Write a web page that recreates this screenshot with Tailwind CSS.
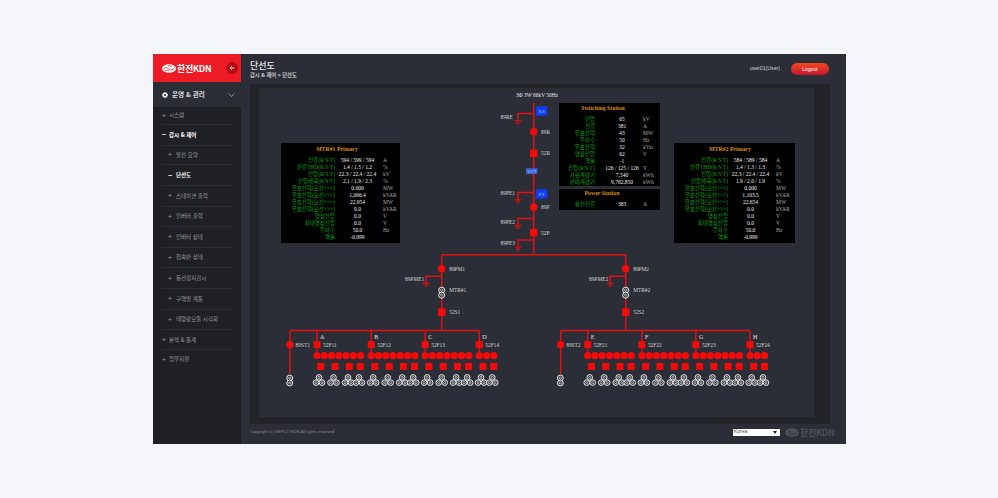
<!DOCTYPE html>
<html lang="ko">
<head>
  <meta charset="UTF-8" />
  <title>단선도</title>
  <script src="https://cdn.jsdelivr.net/npm/@tailwindcss/browser@4"></script>
</head>
<body class="bg-[#f4f6fa] w-[998px] h-[498px] overflow-hidden pt-[54px] pl-[153px] font-['Noto_Sans_CJK_KR',sans-serif]">
  <div class="flex w-[693px] h-[390px] bg-[#2b2e36]">

    <!-- Sidebar -->
    <aside class="w-[88px] h-full shrink-0 flex flex-col bg-[#1f2025]">
      <div class="h-[28px] bg-[#ed1c24] flex items-center pl-[9px] pr-[3px]">
        <svg class="w-[14px] h-[9px] shrink-0" viewBox="0 0 28 18">
          <ellipse cx="14" cy="9" rx="14" ry="8.5" fill="#fff"/>
          <path d="M3 10c5-5 9-1 12 1s7 1 10-4M6 14c4-2 7-1 9 0M12 4c3-1 6 0 8 2" fill="none" stroke="#ed1c24" stroke-width="1.6"/>
        </svg>
        <span class="ml-[1px] text-[9px] leading-none font-bold text-white tracking-[-0.3px] whitespace-nowrap">한전KDN</span>
        <span class="ml-auto w-[12px] h-[12px] rounded-full bg-[#b30d12] flex items-center justify-center">
          <svg class="w-[6px] h-[6px]" viewBox="0 0 12 12" fill="none" stroke="#fff" stroke-width="1.6"><path d="M11 6H2M5.5 2.5 2 6l3.5 3.5"/></svg>
        </span>
      </div>
      <div class="h-[25px] bg-[#2a2d34] flex items-center pl-[9px] pr-[6px]">
        <svg class="w-[6px] h-[6px]" viewBox="0 0 12 12"><circle cx="6" cy="6" r="3.6" fill="none" stroke="#fff" stroke-width="3"/><path d="M6 0v2M6 10v2M0 6h2M10 6h2M1.8 1.8l1.4 1.4M8.8 8.8l1.4 1.4M1.8 10.2l1.4-1.4M8.8 3.2l1.4-1.4" stroke="#fff" stroke-width="1.6"/></svg>
        <span class="ml-[4px] text-[6.6px] leading-none font-bold text-[#d8d8d8]">운영 &amp; 관리</span>
        <svg class="ml-auto w-[7px] h-[4px]" viewBox="0 0 14 8" fill="none" stroke="#a8a8a8" stroke-width="1.6"><path d="m1 1 6 6 6-6"/></svg>
      </div>
      <nav id="menu" class="flex flex-col pl-[9px] pr-[9px] text-[5.5px] text-[#9a9a9a]"></nav>
    </aside>

    <!-- Main -->
    <main class="flex-1 flex flex-col pl-[9px] pr-[16px]">
      <header class="h-[30px] flex items-start justify-between shrink-0">
        <div class="pt-[5px]">
          <h1 class="text-[9px] leading-[13px] font-medium text-[#e8e8e8]">단선도</h1>
          <p class="text-[5.3px] leading-[7px] font-medium text-[#e0e0e0]">감시 &amp; 제어 &gt; 단선도</p>
        </div>
        <div class="flex items-center pt-[9px]">
          <span class="text-[5.2px] text-[#cfcfcf] font-['Liberation_Sans',sans-serif]">user01(User)</span>
          <button class="ml-[11px] mr-[1px] w-[38px] h-[12px] rounded-full bg-gradient-to-b from-[#f2471f] to-[#c5102c] text-[5px] leading-none text-white font-['Liberation_Sans',sans-serif]">Logout</button>
        </div>
      </header>

      <section class="h-[340px] rounded-[3px] bg-[#212327] pl-[9px] pr-[16px] pt-[4px] pb-[7px] shrink-0">
        <div class="relative w-[555px] h-[329px] bg-[#2b2e36] font-['Liberation_Serif','Noto_Sans_CJK_KR',serif]">
          <svg id="sld" class="absolute inset-0" width="555" height="329" viewBox="259 88 555 329"></svg>
          <div id="mtr1" class="absolute left-[22px] top-[55px] w-[119px] h-[100px] bg-black pt-[3px]"></div>
          <div id="mtr2" class="absolute left-[415px] top-[55px] w-[121px] h-[100px] bg-black pt-[3px]"></div>
          <div id="sw" class="absolute left-[300px] top-[15px] w-[101px] h-[83px] bg-black pt-[2px]"></div>
          <div id="ps" class="absolute left-[300px] top-[101px] w-[101px] h-[21px] bg-black pt-[1px]"></div>
        </div>
      </section>

      <footer class="flex-1 flex items-center pb-[4px] font-['Liberation_Sans',sans-serif]">
        <span class="text-[4.2px] text-[#8a8d93] whitespace-nowrap">Copyright (c) KEPCO KDN All rights reserved</span>
        <div class="ml-auto w-[47px] h-[7px] bg-white flex items-center justify-between pl-[1px] pr-[3px] text-[5px] text-[#555]">
          <span>Korea</span>
          <span class="w-0 h-0 border-x-[2px] border-x-transparent border-t-[3px] border-t-[#222]"></span>
        </div>
        <div class="ml-[5px] -mr-[4px] w-[49px] shrink-0 flex items-center text-[#4d5057] font-['Noto_Sans_CJK_KR',sans-serif]">
          <svg class="w-[14px] h-[9px] shrink-0" viewBox="0 0 28 18"><ellipse cx="14" cy="9" rx="14" ry="8.5" fill="#4d5057"/><path d="M3 10c5-5 9-1 12 1s7 1 10-4M6 14c4-2 7-1 9 0" fill="none" stroke="#2b2e36" stroke-width="1.6"/></svg>
          <span class="ml-[1px] text-[9px] leading-none font-bold tracking-[-0.3px] whitespace-nowrap">한전KDN</span>
        </div>
      </footer>
    </main>
  </div>

  <script>
    // sidebar
    const menu = [
      ['시스템', 0, 18], ['감시 & 제어', 0, 20.5, 1], ['발전 요약', 1, 19.7], ['단선도', 1, 20.8, 1],
      ['스테이션 출력', 1, 20.6], ['인버터 출력', 1, 20.6], ['인버터 상태', 1, 20.6], ['접속반 상태', 1, 20.6],
      ['동선정지감시', 1, 20.6], ['구역별 계통', 1, 20.6], ['태양광모듈 시각화', 1, 20.6], ['분석 & 통계', 0, 20], ['업무지원', 0, 19]
    ];
    document.getElementById('menu').innerHTML = menu.map(([name, sub, h, on], i) => `
      <div class="flex items-center border-b ${i < menu.length - 1 ? 'border-[#2b2d32]' : 'border-transparent'} ${sub ? 'pl-[6px]' : ''} ${on ? 'text-white font-bold' : ''}" style="height:${h}px">
        <span class="w-[7px] text-[7px] leading-none">${on ? '−' : '+'}</span><span class="${sub ? 'ml-[1px]' : ''}">${name}</span>
      </div>`).join('');

    // data panels
    function panel(id, title, rows, labelW, valueW, gap, titleX) {
      document.getElementById(id).innerHTML =
        `<div class="h-[7px] leading-[7px] text-[5.8px] font-bold text-[#d98f0e] text-center whitespace-nowrap" style="width:${titleX * 2}px">${title}</div>
         <div class="mt-[3.6px]">` + rows.map(r => `
          <div class="flex h-[7.08px] leading-[7.08px] text-[5.5px] whitespace-nowrap">
            <span class="text-right text-[#0fa015]" style="width:${labelW}px">${r[0]}</span>
            <span class="text-center text-[#f0f0f0]" style="width:${valueW}px;margin-left:${gap}px">${r[1]}</span>
            <span class="ml-[3px] text-[#a8a8a8]">${r[2] || ''}</span>
          </div>`).join('') + '</div>';
    }
    const mtr = (a, b, c, d, e, f, g, h) => [
      ['전류(R/S/T)', a, 'A'], ['전류THD(R/S/T)', b, '%'], ['전압(R/S/T)', c, 'kV'], ['전압왜곡(R/S/T)', d, '%'],
      ['유효전력(모선&lt;&lt;&lt;)', e, 'MW'], ['무효전력(모선&lt;&lt;&lt;)', f, 'kVAR'], ['유효전력(모선&gt;&gt;&gt;)', g, 'MW'], ['무효전력(모선&gt;&gt;&gt;)', h, 'kVAR'],
      ['영상전압', '0.0', 'V'], ['최대영상전압', '0.0', 'V'], ['주파수', '50.0', 'Hz'], ['역률', '-0.999', '']
    ];
    panel('mtr1', 'MTR#1 Primary', mtr('594 / 599 / 594', '1.4 / 1.5 / 1.2', '22.3 / 22.4 / 22.4', '2.1 / 1.9 / 2.3', '0.000', '1,066.4', '22.954', '0.0'), 54, 45, 0, 56);
    panel('mtr2', 'MTR#2 Primary', mtr('584 / 589 / 584', '1.4 / 1.3 / 1.3', '22.3 / 22.4 / 22.4', '1.9 / 2.0 / 1.9', '0.000', '1,103.5', '22.654', '0.0'), 54, 45, 0, 56);
    panel('sw', 'Switching Station', [
      ['전압', '65', 'kV'], ['전류', '381', 'A'], ['유효전력', '43', 'MW'], ['주파수', '50', 'Hz'], ['무효전력', '32', 'kVar'],
      ['영상전압', '62', 'V'], ['역률', '-1', ''], ['전압(R/S/T)', '126 / 125 / 126', 'V'], ['사용계량기', '7,540', 'kWh'], ['판매계량기', '9,762,850', 'kWh']
    ], 36, 36, 9, 44);
    panel('ps', 'Power Station', [['송전전류', '383', 'A']], 36, 36, 9, 43);

    // single line diagram, drawn in page coordinates
    const RED = '#e00f14', BRIGHT = '#f50a0a';
    let s = '';
    const line = d => s += `<path d="${d}" fill="none" stroke="${RED}" stroke-width="1.5"/>`;
    const dot = (x, y, r = 3.7) => s += `<circle cx="${x}" cy="${y}" r="${r}" fill="${BRIGHT}"/>`;
    const box = (x, y, w = 7.4) => s += `<rect x="${x - w / 2}" y="${y - w / 2}" width="${w}" height="${w}" fill="${BRIGHT}"/>`;
    const label = (x, y, t, anchor = 'start', fill = '#d4d4d4', size = 5.4) =>
      s += `<text x="${x}" y="${y + 1.9}" text-anchor="${anchor}" font-size="${size}" fill="${fill}">${t}</text>`;
    // branch off a feeder to an earth switch
    function earth(x, y, ex, name, lx, ly) {
      line(`M${x} ${y}H${ex}V${y + 7}`);
      s += `<path d="M${ex - 3.5} ${y + 7.2}h7M${ex - 2.3} ${y + 8.8}h4.6M${ex - 1.1} ${y + 10.4}h2.2" stroke="${RED}" stroke-width="1" fill="none"/>`;
      label(lx, ly, name);
    }
    function coil(x, y, r = 2.8) {
      s += `<circle cx="${x}" cy="${y}" r="${r}" fill="#2b2e36" stroke="#f2f2f2" stroke-width="1"/>`;
      s += `<circle cx="${x}" cy="${y}" r="${r * .38}" fill="none" stroke="#e8e8e8" stroke-width=".7"/>`;
    }
    const tri = (x, y) => { coil(x, y - 2.6); coil(x - 3, y + 2.6); coil(x + 3, y + 2.6); };
    function blue(y, t) {
      s += `<rect x="535.7" y="${y}" width="11.6" height="9.4" fill="#0f3ef2"/>`;
      label(541.5, y + 4.7, t, 'middle', '#b9c6f5', 4);
    }

    // incoming feeder
    label(537, 95, '3Φ 3W 66kV 50Hz', 'middle', '#e4e4e4');
    line('M533.7 103V254.7M441.7 254.7H625.7');
    blue(106.3, 'N/S'); blue(189.3, 'P/S');
    earth(533.7, 113.4, 518, '89RE', 500.5, 117);
    dot(533.7, 131.7); label(541, 132, '89R');
    box(533.7, 153.3); label(541, 153.5, '52R');
    s += `<rect x="526" y="168.3" width="11.4" height="5.8" fill="#3a61d6"/>`;
    label(531.7, 171.2, 'VCT', 'middle', '#b9c6f5', 4.6);
    earth(533.7, 192.6, 518, '89PE1', 500.5, 192.6);
    dot(533.7, 207.3); label(541, 207.5, '89P');
    earth(533.7, 218.4, 518, '89PE2', 500.5, 221.6);
    box(533.7, 232.7); label(541, 232.8, '52P');
    earth(533.7, 240, 518, '89PE3', 500.5, 243);

    // one transformer bay; dx shifts the feeder group, tx the transformer column
    function bay(n, tx, dx, letters) {
      line(`M${tx} 254.7V330.5M${290 + dx} 330.5H${479.3 + dx}M${290 + dx} 330.5V374`);
      dot(tx, 268.7); label(tx + 7.5, 269, `89PM${n}`);
      earth(tx, 276.2, tx - 15.7, `89PME${n}`, tx - 36.7, 279);
      coil(tx, 290.2, 3); coil(tx, 295.2, 3); label(tx + 7.5, 290, `MTR#${n}`);
      box(tx, 312.2); label(tx + 7.5, 312.2, `52S${n}`);

      dot(290 + dx, 344.7); label(295.5 + dx, 344.6, `89ST${n}`);
      coil(289.7 + dx, 378, 2.9); coil(289.7 + dx, 383, 2.9);

      [317, 371.2, 425.2, 479.3].forEach((fx, i) => {
        const x = fx + dx;
        line(`M${x} 330.5V352`);
        box(x, 344.7, 7);
        label(x + 3, 337, letters[i], 'start', '#e4e4e4', 6);
        label(x + 6, 344.6, `52F${n}${i + 1}`);
        const dots = i === 3 ? 3 : 7;
        for (let k = 0; k < dots; k++) dot(x + k * 7.27, 355.7, 3.6);
        const off = i === 3 ? [3.7, 14.4] : [3.7, 18, 32.3, 43.3];
        off.forEach(o => box(x + o, 366.4, 7));
        const tr = i === 3 ? [1.7, 13] : [2, 16.5, 31, 42];
        tr.forEach(o => tri(x + o, 380));
      });
    }
    bay(1, 441.7, 0, ['A', 'B', 'C', 'D']);
    bay(2, 625.7, 270.7, ['E', 'F', 'G', 'H']);
    document.getElementById('sld').innerHTML = s;
  </script>
</body>
</html>
